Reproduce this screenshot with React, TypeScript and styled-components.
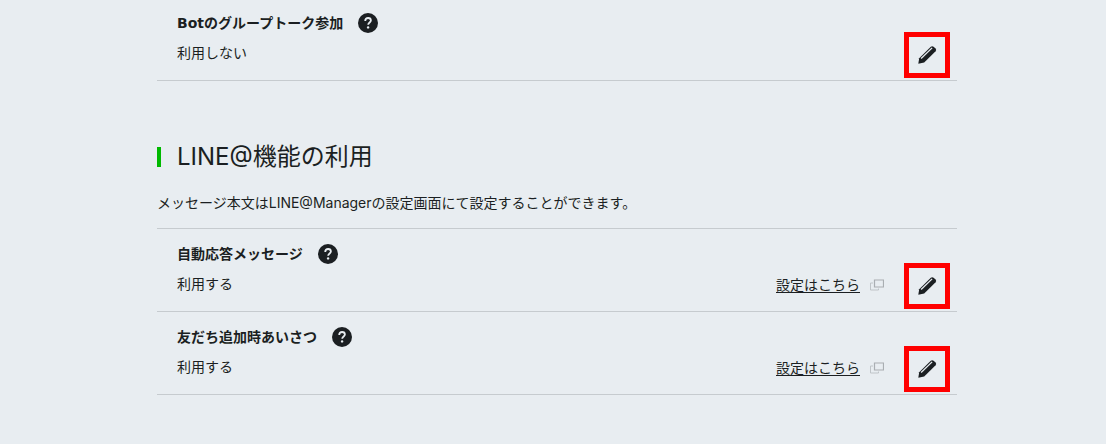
import React from "react";
import styled, { createGlobalStyle } from "styled-components";

const GlobalStyle = createGlobalStyle`
  * { box-sizing: border-box; }
  body {
    margin: 0;
    background: #e8edf1;
    color: #1b1f22;
    font-family: Inter, "Noto Sans CJK JP", sans-serif;
    font-size: 14px;
    line-height: 20px;
  }
`;

const Page = styled.main`
  padding: 0 149px 48px 157px;
`;

const Section = styled.section`
  margin-bottom: 58px;
`;

const SectionTitle = styled.h2`
  display: flex;
  align-items: center;
  gap: 16px;
  margin: 0 0 18px;
  font-size: 24px;
  font-weight: 400;
  line-height: 36px;

  &::before {
    content: "";
    width: 4px;
    height: 20px;
    background: #00b900;
  }
`;

const Lead = styled.p`
  margin: 0 0 15px;
`;

const Rows = styled.div<{ $ruled?: boolean }>`
  border-top: ${(p) => (p.$ruled ? "1px solid #c6cbcf" : "none")};
`;

const Row = styled.div<{ $first?: boolean }>`
  display: flex;
  justify-content: space-between;
  align-items: flex-end;
  padding: ${(p) => (p.$first ? "12px" : "14px")} 7px 0 20px;
  border-bottom: 1px solid #c6cbcf;
`;

const Setting = styled.div`
  padding-bottom: 17px;
`;

const Label = styled.div`
  display: flex;
  align-items: center;
  gap: 15px;
  height: 22px;
  margin-bottom: 9px;
`;

const Name = styled.h3`
  margin: 0;
  font-family: "DejaVu Sans", "Noto Sans CJK JP", sans-serif;
  font-size: 14px;
  font-weight: 700;
  line-height: 20px;
`;

const Value = styled.p`
  margin: 0;
  line-height: 20px;
`;

const IconButton = styled.button`
  display: flex;
  padding: 0;
  border: 0;
  background: none;
  color: inherit;
  cursor: pointer;
`;

const EditButton = styled(IconButton)`
  align-items: center;
  justify-content: center;
  width: 46px;
  height: 46px;
  border: 5px solid #ff0000;
`;

const Actions = styled.div`
  display: flex;
  align-items: center;
  gap: 20px;
  padding-bottom: 2px;
`;

const SettingsLink = styled.a`
  display: flex;
  align-items: center;
  gap: 10px;
  padding-bottom: 2px;
  color: inherit;
  text-decoration: none;
`;

const LinkText = styled.span`
  text-decoration: underline;
  text-underline-offset: 2px;
`;

const HelpIcon = () => (
  <svg width="20" height="20" viewBox="0 0 20 20" aria-hidden="true">
    <circle cx="10" cy="10" r="10" fill="#1b1f22" />
    <path d="M7.2 7.9C7.2 6 8.4 5 10.1 5s2.8 1 2.8 2.5c0 1.9-2.7 2.1-2.7 4.3" fill="none" stroke="#e8edf1" strokeWidth="1.8" />
    <circle cx="10.1" cy="14.4" r="1.2" fill="#e8edf1" />
  </svg>
);

const PencilIcon = () => (
  <svg width="20" height="20" viewBox="0 0 20 20" aria-hidden="true">
    <path d="M1.3 18.8 2.2 13.2 13.8 1.8Q15.2 .6 16.6 1.8L18.6 3.6Q19.8 5 18.6 6.3L7.2 17.6Z" fill="#1b1f22" />
    <path d="M4.1 13.5 15.1 2.9" fill="none" stroke="#e8edf1" strokeWidth="1.3" />
  </svg>
);

const WindowIcon = () => (
  <svg width="14" height="12" viewBox="0 0 14 12" fill="none" stroke="#a9aeb2" aria-hidden="true">
    <path d="M4.5 1h9v7h-9z" strokeWidth="1.2" />
    <path d="M3 4H.5v7h8V9.5" stroke="#bfc4c8" />
  </svg>
);

type ItemProps = { name: string; value: string; link?: boolean; first?: boolean };

const Item = ({ name, value, link, first }: ItemProps) => (
  <Row $first={first}>
    <Setting>
      <Label>
        <Name>{name}</Name>
        <IconButton type="button" aria-label="ヘルプ">
          <HelpIcon />
        </IconButton>
      </Label>
      <Value>{value}</Value>
    </Setting>
    <Actions>
      {link && (
        <SettingsLink href="#">
          <LinkText>設定はこちら</LinkText>
          <WindowIcon />
        </SettingsLink>
      )}
      <EditButton type="button" aria-label="編集">
        <PencilIcon />
      </EditButton>
    </Actions>
  </Row>
);

export default function App() {
  return (
    <>
      <GlobalStyle />
      <Page>
        <Section>
          <Rows>
            <Item name="Botのグループトーク参加" value="利用しない" first />
          </Rows>
        </Section>
        <section>
          <SectionTitle>LINE@機能の利用</SectionTitle>
          <Lead>メッセージ本文はLINE@Managerの設定画面にて設定することができます。</Lead>
          <Rows $ruled>
            <Item name="自動応答メッセージ" value="利用する" link />
            <Item name="友だち追加時あいさつ" value="利用する" link />
          </Rows>
        </section>
      </Page>
    </>
  );
}
